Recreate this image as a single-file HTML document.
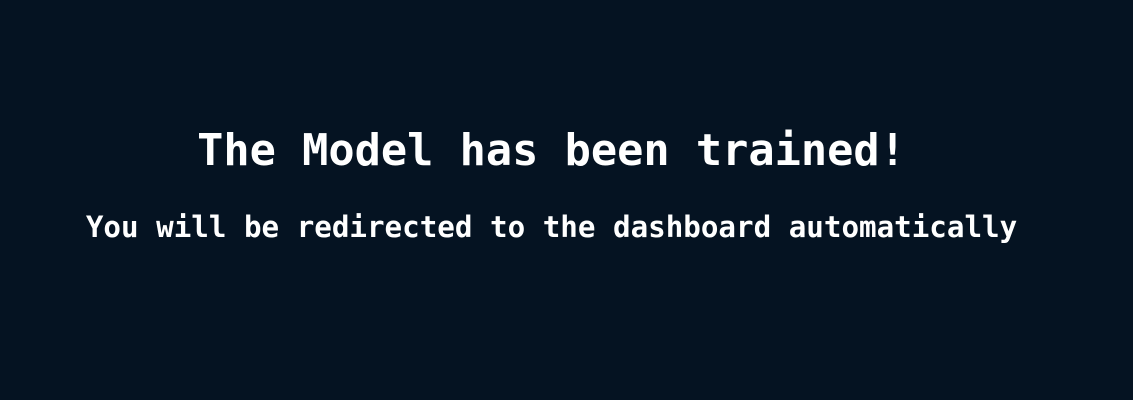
<!DOCTYPE html><html><head><style>
html,body{margin:0;width:1133px;height:400px;background:#051322;overflow:hidden}
div{position:absolute;left:0;width:1103px;text-align:center;color:#fff;font-family:"DejaVu Sans Mono",monospace;font-weight:bold;white-space:nowrap;line-height:1}
#a{font-size:43.6px;top:130px}
#b{font-size:29.2px;top:213px}
</style></head><body>
<div id="a">The Model has been trained!</div>
<div id="b">You will be redirected to the dashboard automatically</div>
</body></html>
